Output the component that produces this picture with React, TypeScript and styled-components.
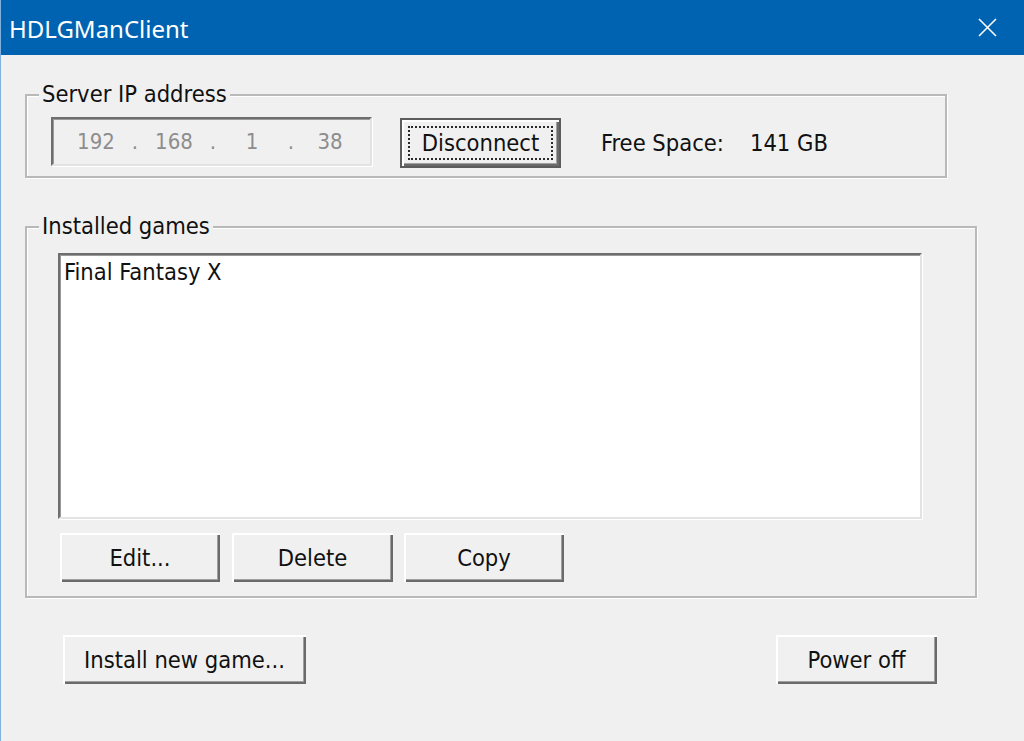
import React from "react";
import styled, { createGlobalStyle, css } from "styled-components";

const GlobalStyle = createGlobalStyle`
  html, body { margin: 0; padding: 0; background: #f0f0f0; }
  body { font-family: "DejaVu Sans Condensed", "DejaVu Sans", sans-serif; }
  * { box-sizing: border-box; }
`;

const Window = styled.div`
  width: 1024px;
  height: 741px;
  display: flex;
  flex-direction: column;
  background: #f0f0f0;
  border-left: 1px solid #7fb0de;
  overflow: hidden;
`;

const TitleBar = styled.div`
  height: 55px;
  flex: none;
  background: #0063b1;
  display: flex;
  align-items: center;
  justify-content: space-between;
  padding: 0 27px 0 8px;
`;

const Title = styled.span`
  color: #ffffff;
  font-family: "Noto Sans", "Open Sans", sans-serif;
  font-size: 24px;
  margin-top: 2px;
`;

const CloseIcon = styled.svg`
  width: 19px;
  height: 19px;
  display: block;
`;

const Body = styled.div`
  display: flex;
  flex-direction: column;
  padding: 39px 0 0 24px;
  font-size: 23.5px;
  color: #000;
`;

const GroupBox = styled.div<{ $w: number; $h: number; $mt?: number; $pad: string }>`
  position: relative;
  width: ${(p) => p.$w}px;
  height: ${(p) => p.$h}px;
  margin-top: ${(p) => p.$mt ?? 0}px;
  padding: ${(p) => p.$pad};
  border: 2px solid #b9b9b9;
  box-shadow: inset 1px 1px 0 #ffffff, 1px 1px 0 #ffffff;
`;

const Legend = styled.span`
  position: absolute;
  top: -15px;
  left: 12px;
  padding: 0 3px;
  background: #f0f0f0;
  line-height: 26px;
  color: #111;
`;

const Row = styled.div<{ $mt?: number }>`
  display: flex;
  align-items: flex-start;
  margin-top: ${(p) => p.$mt ?? 0}px;
`;

const sunken = css`
  border-style: solid;
  border-width: 2px;
  border-color: #6e6e6e #e3e3e3 #e3e3e3 #6e6e6e;
  box-shadow: inset 1px 1px 0 #9a9a9a, 1px 1px 0 #ffffff;
`;

const IpField = styled.div`
  ${sunken};
  width: 321px;
  height: 49px;
  background: #f0f0f0;
  display: flex;
  align-items: center;
  padding-left: 14px;
  color: #8d8d8d;
  font-size: 22px;
`;

const Octet = styled.span`
  width: 58px;
  text-align: center;
`;

const Dot = styled.span`
  width: 20px;
  text-align: center;
`;

const raised = css`
  padding: 0;
  font: inherit;
  color: #111;
  background: #f0f0f0;
  display: flex;
  align-items: center;
  justify-content: center;
  flex: none;
  box-shadow:
    inset 2px 2px 0 #ffffff,
    inset -2px -2px 0 #6a6a6a,
    inset -3px -3px 0 #a0a0a0;
`;

const Button = styled.button<{ $w: number; $ml?: number }>`
  ${raised};
  width: ${(p) => p.$w}px;
  height: 49px;
  margin-left: ${(p) => p.$ml ?? 0}px;
  border: none;
`;

const DefaultButton = styled.button`
  ${raised};
  width: 161px;
  height: 50px;
  margin-left: 28px;
  margin-top: 1px;
  border: 2px solid #5c5c5c;
`;

const FocusRect = styled.span`
  display: flex;
  align-items: center;
  justify-content: center;
  width: 145px;
  height: 34px;
  border: 2px dotted #2a2a2a;
`;

const InfoText = styled.span<{ $ml: number }>`
  margin-left: ${(p) => p.$ml}px;
  line-height: 52px;
  color: #111;
`;

const ListBox = styled.div`
  ${sunken};
  width: 864px;
  height: 266px;
  background: #ffffff;
  padding: 3px 0 0 4px;
`;

const ListItem = styled.div`
  line-height: 28px;
  color: #111;
`;

const BottomRow = styled.div`
  display: flex;
  margin-top: 37px;
`;

export default function App() {
  return (
    <>
      <GlobalStyle />
      <Window>
        <TitleBar>
          <Title>HDLGManClient</Title>
          <CloseIcon viewBox="0 0 19 19">
            <path d="M1 1 L18 18 M18 1 L1 18" stroke="#ffffff" strokeWidth="1.6" fill="none" />
          </CloseIcon>
        </TitleBar>
        <Body>
          <GroupBox $w={922} $h={84} $pad="21px 0 0 24px">
            <Legend>Server IP address</Legend>
            <Row>
              <IpField>
                <Octet>192</Octet>
                <Dot>.</Dot>
                <Octet>168</Octet>
                <Dot>.</Dot>
                <Octet>1</Octet>
                <Dot>.</Dot>
                <Octet>38</Octet>
              </IpField>
              <DefaultButton>
                <FocusRect>Disconnect</FocusRect>
              </DefaultButton>
              <InfoText $ml={40}>Free Space:</InfoText>
              <InfoText $ml={26}>141 GB</InfoText>
            </Row>
          </GroupBox>
          <GroupBox $w={952} $h={372} $mt={48} $pad="25px 0 0 31px">
            <Legend>Installed games</Legend>
            <ListBox>
              <ListItem>Final Fantasy X</ListItem>
            </ListBox>
            <Row $mt={14}>
              <Button $w={160} $ml={2}>Edit...</Button>
              <Button $w={161} $ml={12}>Delete</Button>
              <Button $w={160} $ml={11}>Copy</Button>
            </Row>
          </GroupBox>
          <BottomRow>
            <Button $w={243} $ml={38}>Install new game...</Button>
            <Button $w={161} $ml={470}>Power off</Button>
          </BottomRow>
        </Body>
      </Window>
    </>
  );
}
